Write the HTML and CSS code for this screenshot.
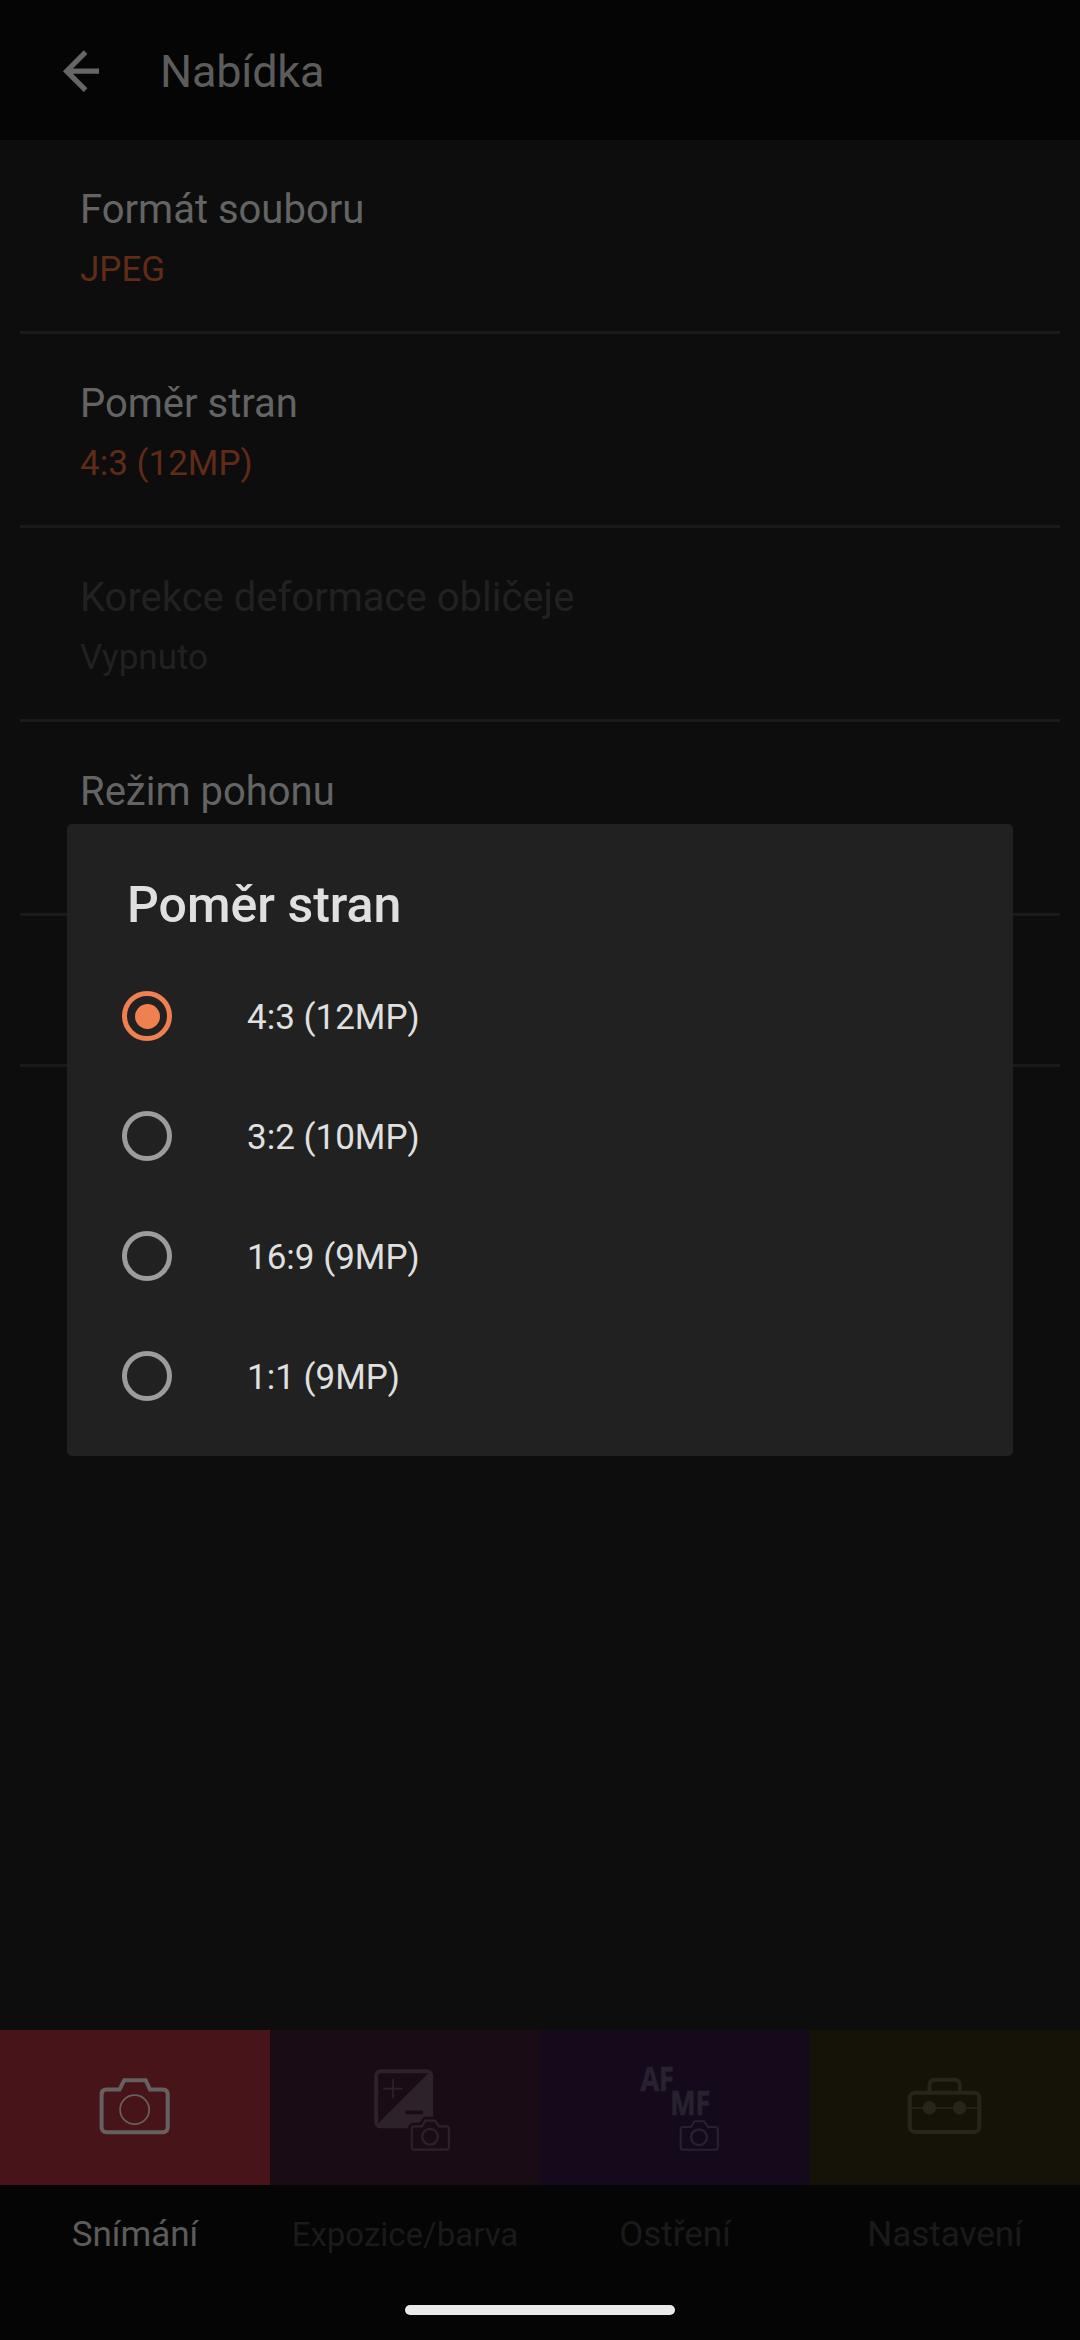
FILE: index.html
```html
<!DOCTYPE html>
<html lang="cs">
<head>
<meta charset="utf-8">
<title>Nabídka</title>
<link rel="stylesheet" href="styles.css">
</head>
<body>
<div class="screen">
  <header class="appbar">
    <svg class="back" width="44" height="44" viewBox="59 49 44 44" fill="none" stroke="#666666" stroke-width="5.2">
      <path d="M85.6 52.2L66.6 71.2L85.6 90.2M66 71.2H99"/>
    </svg>
    <h1 class="appbar-title">Nabídka</h1>
  </header>

  <main class="list">
    <div class="item"><div class="item-title">Formát souboru</div><div class="item-value">JPEG</div></div>
    <div class="item"><div class="item-title">Poměr stran</div><div class="item-value">4:3 (12MP)</div></div>
    <div class="item disabled"><div class="item-title">Korekce deformace obličeje</div><div class="item-value">Vypnuto</div></div>
    <div class="item"><div class="item-title">Režim pohonu</div></div>
    <div class="item short"></div>
  </main>

  <nav class="tabs">
    <div class="tab active">
      <svg class="tab-icon red" viewBox="0 0 270 155" fill="none" stroke="#666060">
        <path stroke-width="4" d="M106.5 59.6H119.5L124.2 50.2H145.6L150 59.6H162.5Q167.7 59.6 167.7 64.8V97Q167.7 102.2 162.5 102.2H106.8Q101.6 102.2 101.6 97V64.8Q101.6 59.6 106.5 59.6Z"/>
        <circle cx="134.6" cy="79.7" r="14.5" stroke-width="1.7"/>
      </svg>
      <div class="tab-label">Snímání</div>
    </div>
    <div class="tab">
      <svg class="tab-icon plum" viewBox="0 0 270 155" fill="none" stroke="#2d2229">
        <rect x="106.2" y="41.3" width="55" height="55" rx="4.5" stroke-width="4"/>
        <path fill="#2d2229" stroke="none" d="M158.4 43.3H163V93Q163 98 158 98H108V93.4Z"/>
        <path stroke-width="1.8" d="M113.2 58.7H132.8M123 49V68.3"/>
        <path stroke="#1a0c15" stroke-width="3.6" d="M135.3 82.4H152.8"/>
        <path fill="#1a0c15" stroke="#1a0c15" stroke-width="7.5" stroke-linejoin="round" d="M144.3 96.4H151.8L155.5 90.6H165L169 96.4H176.3Q178.9 96.4 178.9 99V117Q178.9 119.6 176.3 119.6H144.3Q141.7 119.6 141.7 117V99Q141.7 96.4 144.3 96.4Z"/>
        <path stroke-width="2.1" d="M144.3 96.4H151.8L155.5 90.6H165L169 96.4H176.3Q178.9 96.4 178.9 99V117Q178.9 119.6 176.3 119.6H144.3Q141.7 119.6 141.7 117V99Q141.7 96.4 144.3 96.4Z"/>
        <circle cx="160" cy="106.8" r="7.9" stroke-width="2.3"/>
      </svg>
      <div class="tab-label small">Expozice/barva</div>
    </div>
    <div class="tab">
      <svg class="tab-icon indigo" viewBox="0 0 270 155" fill="none" stroke="#28212e">
        <g class="focus-text" fill="#28212e" stroke-width="0.7">
          <text x="100.4" y="60.6" textLength="33.6" lengthAdjust="spacingAndGlyphs">AF</text>
          <text x="130.3" y="84.8" textLength="40" lengthAdjust="spacingAndGlyphs">MF</text>
        </g>
        <path stroke-width="2.1" d="M143.3 97H150.8L154.5 91.2H164L168 97H175.3Q177.9 97 177.9 99.6V117.2Q177.9 119.8 175.3 119.8H143.3Q140.7 119.8 140.7 117.2V99.6Q140.7 97 143.3 97Z"/>
        <circle cx="159" cy="107.2" r="7.9" stroke-width="2.3"/>
      </svg>
      <div class="tab-label">Ostření</div>
    </div>
    <div class="tab">
      <svg class="tab-icon olive" viewBox="0 0 270 155" fill="none" stroke="#27241a">
        <rect x="99.8" y="62.7" width="69.5" height="39.2" rx="5" stroke-width="4"/>
        <path stroke-width="4" d="M119.5 62V55.7Q119.5 49.8 125.4 49.8H144Q149.9 49.8 149.9 55.7V62"/>
        <path stroke-width="1.7" d="M100 78H169"/>
        <circle cx="119.4" cy="77.8" r="6.7" fill="#27241a" stroke="none"/>
        <circle cx="149.6" cy="77.8" r="6.7" fill="#27241a" stroke="none"/>
      </svg>
      <div class="tab-label">Nastavení</div>
    </div>
  </nav>
  <div class="gesture"><span class="pill"></span></div>

  <section class="dialog">
    <h2 class="dialog-title">Poměr stran</h2>
    <div class="option"><span class="radio checked"></span><span class="option-label">4:3 (12MP)</span></div>
    <div class="option"><span class="radio"></span><span class="option-label">3:2 (10MP)</span></div>
    <div class="option"><span class="radio"></span><span class="option-label">16:9 (9MP)</span></div>
    <div class="option"><span class="radio"></span><span class="option-label">1:1 (9MP)</span></div>
  </section>
</div>
</body>
</html>
```
FILE: styles.css
```css
* { box-sizing: border-box; }
body { margin: 0; background: #050505; font-family: Roboto, "Noto Sans", sans-serif; }
h1, h2 { margin: 0; font-weight: 400; }
.screen {
  position: relative;
  display: flex;
  flex-direction: column;
  width: 1080px;
  height: 2340px;
  overflow: hidden;
  background: #0d0d0d;
}

.appbar {
  display: flex;
  align-items: center;
  height: 140px;
  padding-left: 59px;
  gap: 57px;
  background: #050505;
}
.back { display: block; margin-top: 2px; }
.appbar-title { padding-top: 3px; font-size: 45px; line-height: 54px; letter-spacing: -0.2px; color: #5c5c5c; }

.list { flex: 1; padding: 0 20px; }
.item {
  height: 194px;
  padding: 46px 60px 0;
  border-bottom: 3px solid #1a1a1a;
  color: #646464;
}
.item.short { height: 151px; }
.item-title { font-size: 40px; line-height: 48px; }
.item-value { margin-top: 15px; font-size: 35px; line-height: 42px; color: #602b17; }
.disabled, .disabled .item-value { color: #212121; }

.tabs { display: grid; grid-template-columns: repeat(4, 1fr); height: 240px; background: #050505; }
.tab-icon { display: block; width: 270px; height: 155px; }
.red { background: #471519; }
.plum { background: #1a0c15; }
.indigo { background: #140a1b; }
.olive { background: #151307; }
.focus-text { font-family: "Open Sans", sans-serif; font-size: 33.6px; font-weight: 700; }
.tab-label {
  padding-top: 29px;
  font-size: 35px;
  line-height: 42px;
  text-align: center;
  color: #1a1a1a;
}
.tab-label.small { font-size: 33px; }
.active .tab-label { color: #5c5c5c; }

.gesture { display: flex; justify-content: center; height: 70px; padding-top: 35px; background: #050505; }
.pill { width: 270px; height: 10px; border-radius: 5px; background: #ebebeb; }

.dialog {
  position: absolute;
  left: 67px;
  top: 824px;
  width: 946px;
  height: 632px;
  padding: 51px 55px 20px;
  border-radius: 5px;
  background: #212121;
  color: #e0e0e0;
}
.dialog-title { margin: 0 5px 21px; font-size: 50px; line-height: 60px; font-weight: 500; }
.option { display: flex; align-items: center; gap: 75px; height: 120px; }
.radio {
  display: grid;
  place-items: center;
  width: 50px;
  height: 50px;
  border: 5px solid #9c9c9c;
  border-radius: 50%;
}
.radio.checked { border-color: #f08050; }
.radio.checked::before { content: ""; width: 25px; height: 25px; border-radius: 50%; background: #f08050; }
.option-label { padding-top: 4px; font-size: 35px; line-height: 42px; }
```
